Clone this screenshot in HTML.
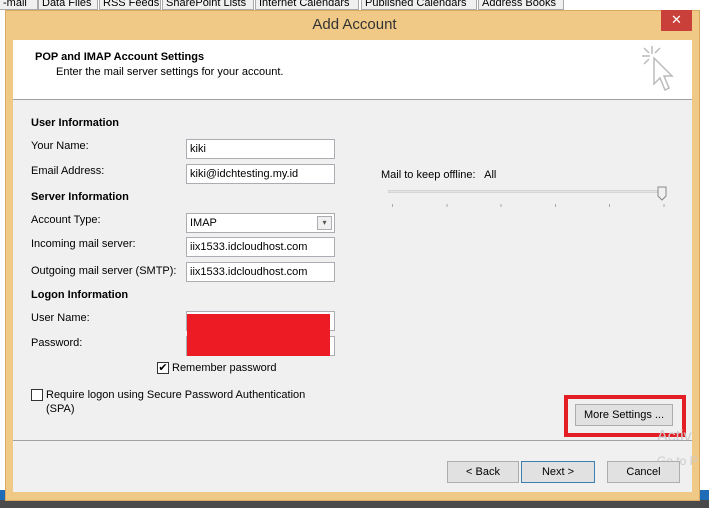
<!DOCTYPE html>
<html><head><meta charset="utf-8"><style>
*{margin:0;padding:0;box-sizing:border-box}
body{width:709px;height:508px;position:relative;overflow:hidden;background:#fff;font-family:"Liberation Sans",sans-serif;font-size:11px;color:#000}
.a{position:absolute}
.tab{position:absolute;top:0;height:10px;background:#f0f0f0;border:1px solid #aaa;border-top:none;font-size:11px;line-height:6px;padding:0 3px;overflow:hidden;white-space:nowrap}
.in{position:absolute;left:186px;width:149px;height:20px;background:#fff;border:1px solid #abadb3;padding-left:3px;line-height:18px;font-size:11px}
.lb{position:absolute;left:31px;font-size:11px}
.h{position:absolute;left:31px;font-weight:bold;font-size:11px}
.btn{position:absolute;height:22px;background:#e1e1e1;border:1px solid #adadad;text-align:center;line-height:20px;font-size:11px}
</style></head><body>
<div class="a" style="left:0;top:0;width:709px;height:12px;background:#fff"></div>
<div class="tab" style="left:0;width:38px;border-left:none">-mail</div>
<div class="tab" style="left:38px;width:60px">Data Files</div>
<div class="tab" style="left:99px;width:62px">RSS Feeds</div>
<div class="tab" style="left:162px;width:92px">SharePoint Lists</div>
<div class="tab" style="left:255px;width:104px">Internet Calendars</div>
<div class="tab" style="left:361px;width:116px">Published Calendars</div>
<div class="tab" style="left:478px;width:86px">Address Books</div>
<div class="a" style="left:0;top:490px;width:709px;height:10px;background:#1e6cb8"></div>
<div class="a" style="left:0;top:500px;width:709px;height:8px;background:#4a4a4a"></div>
<div class="a" style="left:5px;top:10px;width:695px;height:491px;background:#f0c987;border:1px solid #d9ab62"></div>
<div class="a" style="left:0;top:10px;width:709px;height:30px;text-align:center;line-height:30px;font-size:15px;color:#333">Add Account</div>
<div class="a" style="left:661px;top:10px;width:31px;height:21px;background:#c9403a;color:#fff;text-align:center;line-height:20px;font-size:13px">✕</div>
<div class="a" style="left:13px;top:40px;width:679px;height:452px;background:#f0f0f0"></div>
<div class="a" style="left:13px;top:40px;width:679px;height:60px;background:#fff;border-bottom:1px solid #a0a0a0"></div>
<div class="a" style="left:35px;top:51px;font-weight:bold;font-size:11px">POP and IMAP Account Settings</div>
<div class="a" style="left:56px;top:66px;font-size:11px">Enter the mail server settings for your account.</div>
<svg class="a" style="left:640px;top:44px" width="40" height="52" viewBox="0 0 40 52"><g stroke="#bbb" stroke-width="1.5" fill="none"><line x1="12" y1="2" x2="12" y2="10"/><line x1="2" y1="12" x2="10" y2="12"/><line x1="4" y1="4" x2="9" y2="9"/><line x1="20" y1="4" x2="15" y2="9"/><line x1="4" y1="20" x2="9" y2="15"/><path d="M14 14 L14 40 L20 34 L25 46 L29 44 L24 32 L32 32 Z" fill="#fff"/></g></svg>
<div class="h" style="top:117px">User Information</div>
<div class="lb" style="top:140px">Your Name:</div>
<div class="in" style="top:139px">kiki</div>
<div class="lb" style="top:165px">Email Address:</div>
<div class="in" style="top:164px">kiki@idchtesting.my.id</div>
<div class="h" style="top:191px">Server Information</div>
<div class="lb" style="top:214px">Account Type:</div>
<div class="in" style="top:213px">IMAP<div class="a" style="right:2px;top:2px;width:15px;height:14px;border:1px solid #abadb3;background:#f0f0f0;font-size:8px;text-align:center;line-height:12px;color:#555">▾</div></div>
<div class="lb" style="top:238px">Incoming mail server:</div>
<div class="in" style="top:237px">iix1533.idcloudhost.com</div>
<div class="lb" style="top:265px">Outgoing mail server (SMTP):</div>
<div class="in" style="top:262px">iix1533.idcloudhost.com</div>
<div class="h" style="top:289px">Logon Information</div>
<div class="lb" style="top:312px">User Name:</div>
<div class="in" style="top:311px"></div>
<div class="lb" style="top:337px">Password:</div>
<div class="in" style="top:336px"></div>
<div class="a" style="left:187px;top:314px;width:143px;height:42px;background:#ed1c24"></div>
<div class="a" style="left:157px;top:362px;width:12px;height:12px;border:1px solid #333;background:#fff;font-size:11px;line-height:10px;text-align:center">✔</div>
<div class="a" style="left:172px;top:362px;font-size:11px">Remember password</div>
<div class="a" style="left:31px;top:389px;width:12px;height:12px;border:1px solid #333;background:#fff"></div>
<div class="a" style="left:46px;top:388px;font-size:11px;line-height:14px">Require logon using Secure Password Authentication<br>(SPA)</div>
<div class="a" style="left:381px;top:169px;font-size:11px">Mail to keep offline:&nbsp;&nbsp; All</div>
<div class="a" style="left:388px;top:190px;width:278px;height:3px;background:#e3e3e3;border:1px solid #d6d6d6"></div>
<svg class="a" style="left:657px;top:186px" width="10" height="16"><path d="M1 1 H9 V10 L5 14 L1 10 Z" fill="#f0f0f0" stroke="#888"/></svg>
<div class="a" style="left:392px;top:204px;width:275px;height:3px;background:repeating-linear-gradient(90deg,#aaa 0 1px,transparent 1px 54.3px)"></div>
<div class="a" style="left:564px;top:395px;width:122px;height:42px;border:4px solid #e31e24"></div>
<div class="btn" style="left:575px;top:404px;width:98px">More Settings ...</div>
<div class="a" style="left:657px;top:428px;font-size:16px;color:#ccc">Activ</div>
<div class="a" style="left:657px;top:454px;font-size:12px;color:#ccc">Go to P</div>
<div class="a" style="left:13px;top:440px;width:679px;height:1px;background:#a0a0a0"></div>
<div class="btn" style="left:447px;top:461px;width:72px">&lt; Back</div>
<div class="btn" style="left:521px;top:461px;width:74px;border-color:#3c7fb1">Next &gt;</div>
<div class="btn" style="left:607px;top:461px;width:73px">Cancel</div>
</body></html>
